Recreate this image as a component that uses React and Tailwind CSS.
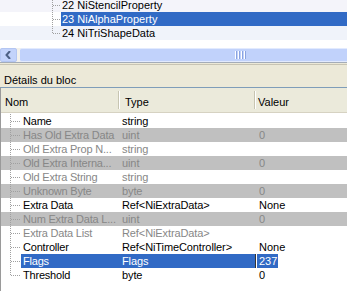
import React from "react";

const rows = [
  { n: "Name", t: "string", v: "" },
  { n: "Has Old Extra Data", t: "uint", v: "0", g: true },
  { n: "Old Extra Prop N...", t: "string", v: "", dim: true },
  { n: "Old Extra Interna...", t: "uint", v: "0", g: true },
  { n: "Old Extra String", t: "string", v: "", dim: true },
  { n: "Unknown Byte", t: "byte", v: "0", g: true },
  { n: "Extra Data", t: "Ref<NiExtraData>", v: "None" },
  { n: "Num Extra Data L...", t: "uint", v: "0", g: true },
  { n: "Extra Data List", t: "Ref<NiExtraData>", v: "", dim: true },
  { n: "Controller", t: "Ref<NiTimeController>", v: "None" },
  { n: "Flags", t: "Flags", v: "237", sel: true },
  { n: "Threshold", t: "byte", v: "0", last: true },
];

function Connector({ x, w, last }) {
  return (
    <svg width={w} height="14" className="shrink-0" shapeRendering="crispEdges">
      <line x1={x + 0.5} y1="0" x2={x + 0.5} y2={last ? 7 : 14} stroke="#a0a0a0" strokeDasharray="1 1" />
      <line x1={x + 1} y1="7.5" x2={w - 1} y2="7.5" stroke="#a0a0a0" strokeDasharray="1 1" />
    </svg>
  );
}

function TreeRow({ label, sel, last, bg }) {
  return (
    <div className={`flex h-[14px] items-center ${bg}`}>
      <div className="w-[52px] shrink-0" />
      <Connector x={0} w={9} last={last} />
      <div
        className={`flex-1 h-[14px] flex items-center pl-[1px] ${sel ? "bg-[#316ac5] text-white" : "text-black"}`}
      >
        {label}
      </div>
    </div>
  );
}

export default function App() {
  return (
    <div
      className="w-[347px] h-[291px] overflow-hidden bg-white text-[11px] leading-[14px] flex flex-col"
      style={{ fontFamily: '"Liberation Sans", Arial, sans-serif' }}
    >
      {/* top tree */}
      <div className="h-[48px] shrink-0 overflow-hidden bg-white">
        <div className="mt-[-2px] flex flex-col">
          <TreeRow label="22 NiStencilProperty" bg="bg-[#f4f4fa]" />
          <TreeRow label="23 NiAlphaProperty" sel />
          <TreeRow label="24 NiTriShapeData" last bg="bg-[#f0f3fa]" />
        </div>
      </div>

      {/* horizontal scrollbar */}
      <div className="h-[15px] shrink-0 flex bg-[#f3f1ec] border-b border-[#a4acb8]">
        <div className="w-[17px] h-full bg-[#c3d3fb] border border-[#b4c6f2] rounded-[2px] flex items-center justify-center">
          <svg width="7" height="8" viewBox="0 0 7 8">
            <path d="M5 0 L1.5 4 L5 8" fill="none" stroke="#4d6185" strokeWidth="2" />
          </svg>
        </div>
        <div className="w-[3px]" />
        <div className="flex-1 h-full bg-[#c1d2fb] border-t border-[#e2eafe] border-b border-[#a9bcec] rounded-l-[2px] flex items-center">
          <div className="w-[215px]" />
          <div className="flex h-[8px]">
            <div className="w-[1px] bg-white" />
            <div className="w-[1px] bg-[#8ba3e0]" />
            <div className="w-[1px]" />
            <div className="w-[1px] bg-white" />
            <div className="w-[1px] bg-[#8ba3e0]" />
            <div className="w-[1px]" />
            <div className="w-[1px] bg-white" />
            <div className="w-[1px] bg-[#8ba3e0]" />
            <div className="w-[1px]" />
            <div className="w-[1px] bg-white" />
            <div className="w-[1px] bg-[#8ba3e0]" />
          </div>
        </div>
      </div>
      <div className="h-[1px] shrink-0 bg-[#ece9d8]" />

      {/* dock title */}
      <div className="h-[23px] shrink-0 bg-[#ece9d8] border-t border-[#c8c4b4] pl-[4px] pt-[8px] text-black">
        Détails du bloc
      </div>

      {/* list */}
      <div className="flex-1 flex flex-col border-t border-[#7f9db9] border-l border-l-[#9a9a9a] bg-white">
        {/* header */}
        <div className="h-[25px] shrink-0 flex bg-[#ebeadb] border-b border-[#d6d2c2] text-black">
          <div className="w-[117px] flex items-center pl-[4px] pt-[4px]">Nom</div>
          <div className="w-[2px] flex flex-col py-[3px]">
            <div className="flex-1 flex">
              <div className="w-[1px] bg-[#c7c5b2]" />
              <div className="w-[1px] bg-white" />
            </div>
          </div>
          <div className="w-[134px] flex items-center pl-[5px] pt-[4px]">Type</div>
          <div className="w-[2px] flex flex-col py-[3px]">
            <div className="flex-1 flex">
              <div className="w-[1px] bg-[#c7c5b2]" />
              <div className="w-[1px] bg-white" />
            </div>
          </div>
          <div className="flex-1 flex items-center pl-[2px] pt-[4px]">Valeur</div>
        </div>
        <div className="h-[1px] shrink-0" />

        {rows.map((r) => {
          const rowBg = r.g ? "bg-[#c0c0c0]" : "bg-white";
          const txt = r.g || r.dim ? "text-[#878787]" : "text-black";
          return (
            <div key={r.n} className={`flex h-[14px] shrink-0 ${rowBg} ${txt}`}>
              <Connector x={9} w={20} last={r.last} />
              <div
                className={`w-[234px] shrink-0 flex ${r.sel ? "bg-[#316ac5] text-white" : ""}`}
              >
                <div className="w-[97px] shrink-0 pl-[2px] whitespace-nowrap tracking-[-0.2px]">{r.n}</div>
                <div className="flex-1 pl-[4px] whitespace-nowrap tracking-[-0.1px]">{r.t}</div>
              </div>
              <div className="flex-1 flex whitespace-nowrap">
                {r.sel ? (
                  <div className="flex h-full">
                    <div className="w-[1px] bg-[#333]" />
                    <div className="w-[1px]" />
                    <span className="bg-[#316ac5] text-white pl-[2px] pr-[1px]">{r.v}</span>
                  </div>
                ) : (
                  <span className="pl-[4px]">{r.v}</span>
                )}
              </div>
            </div>
          );
        })}
      </div>
    </div>
  );
}
